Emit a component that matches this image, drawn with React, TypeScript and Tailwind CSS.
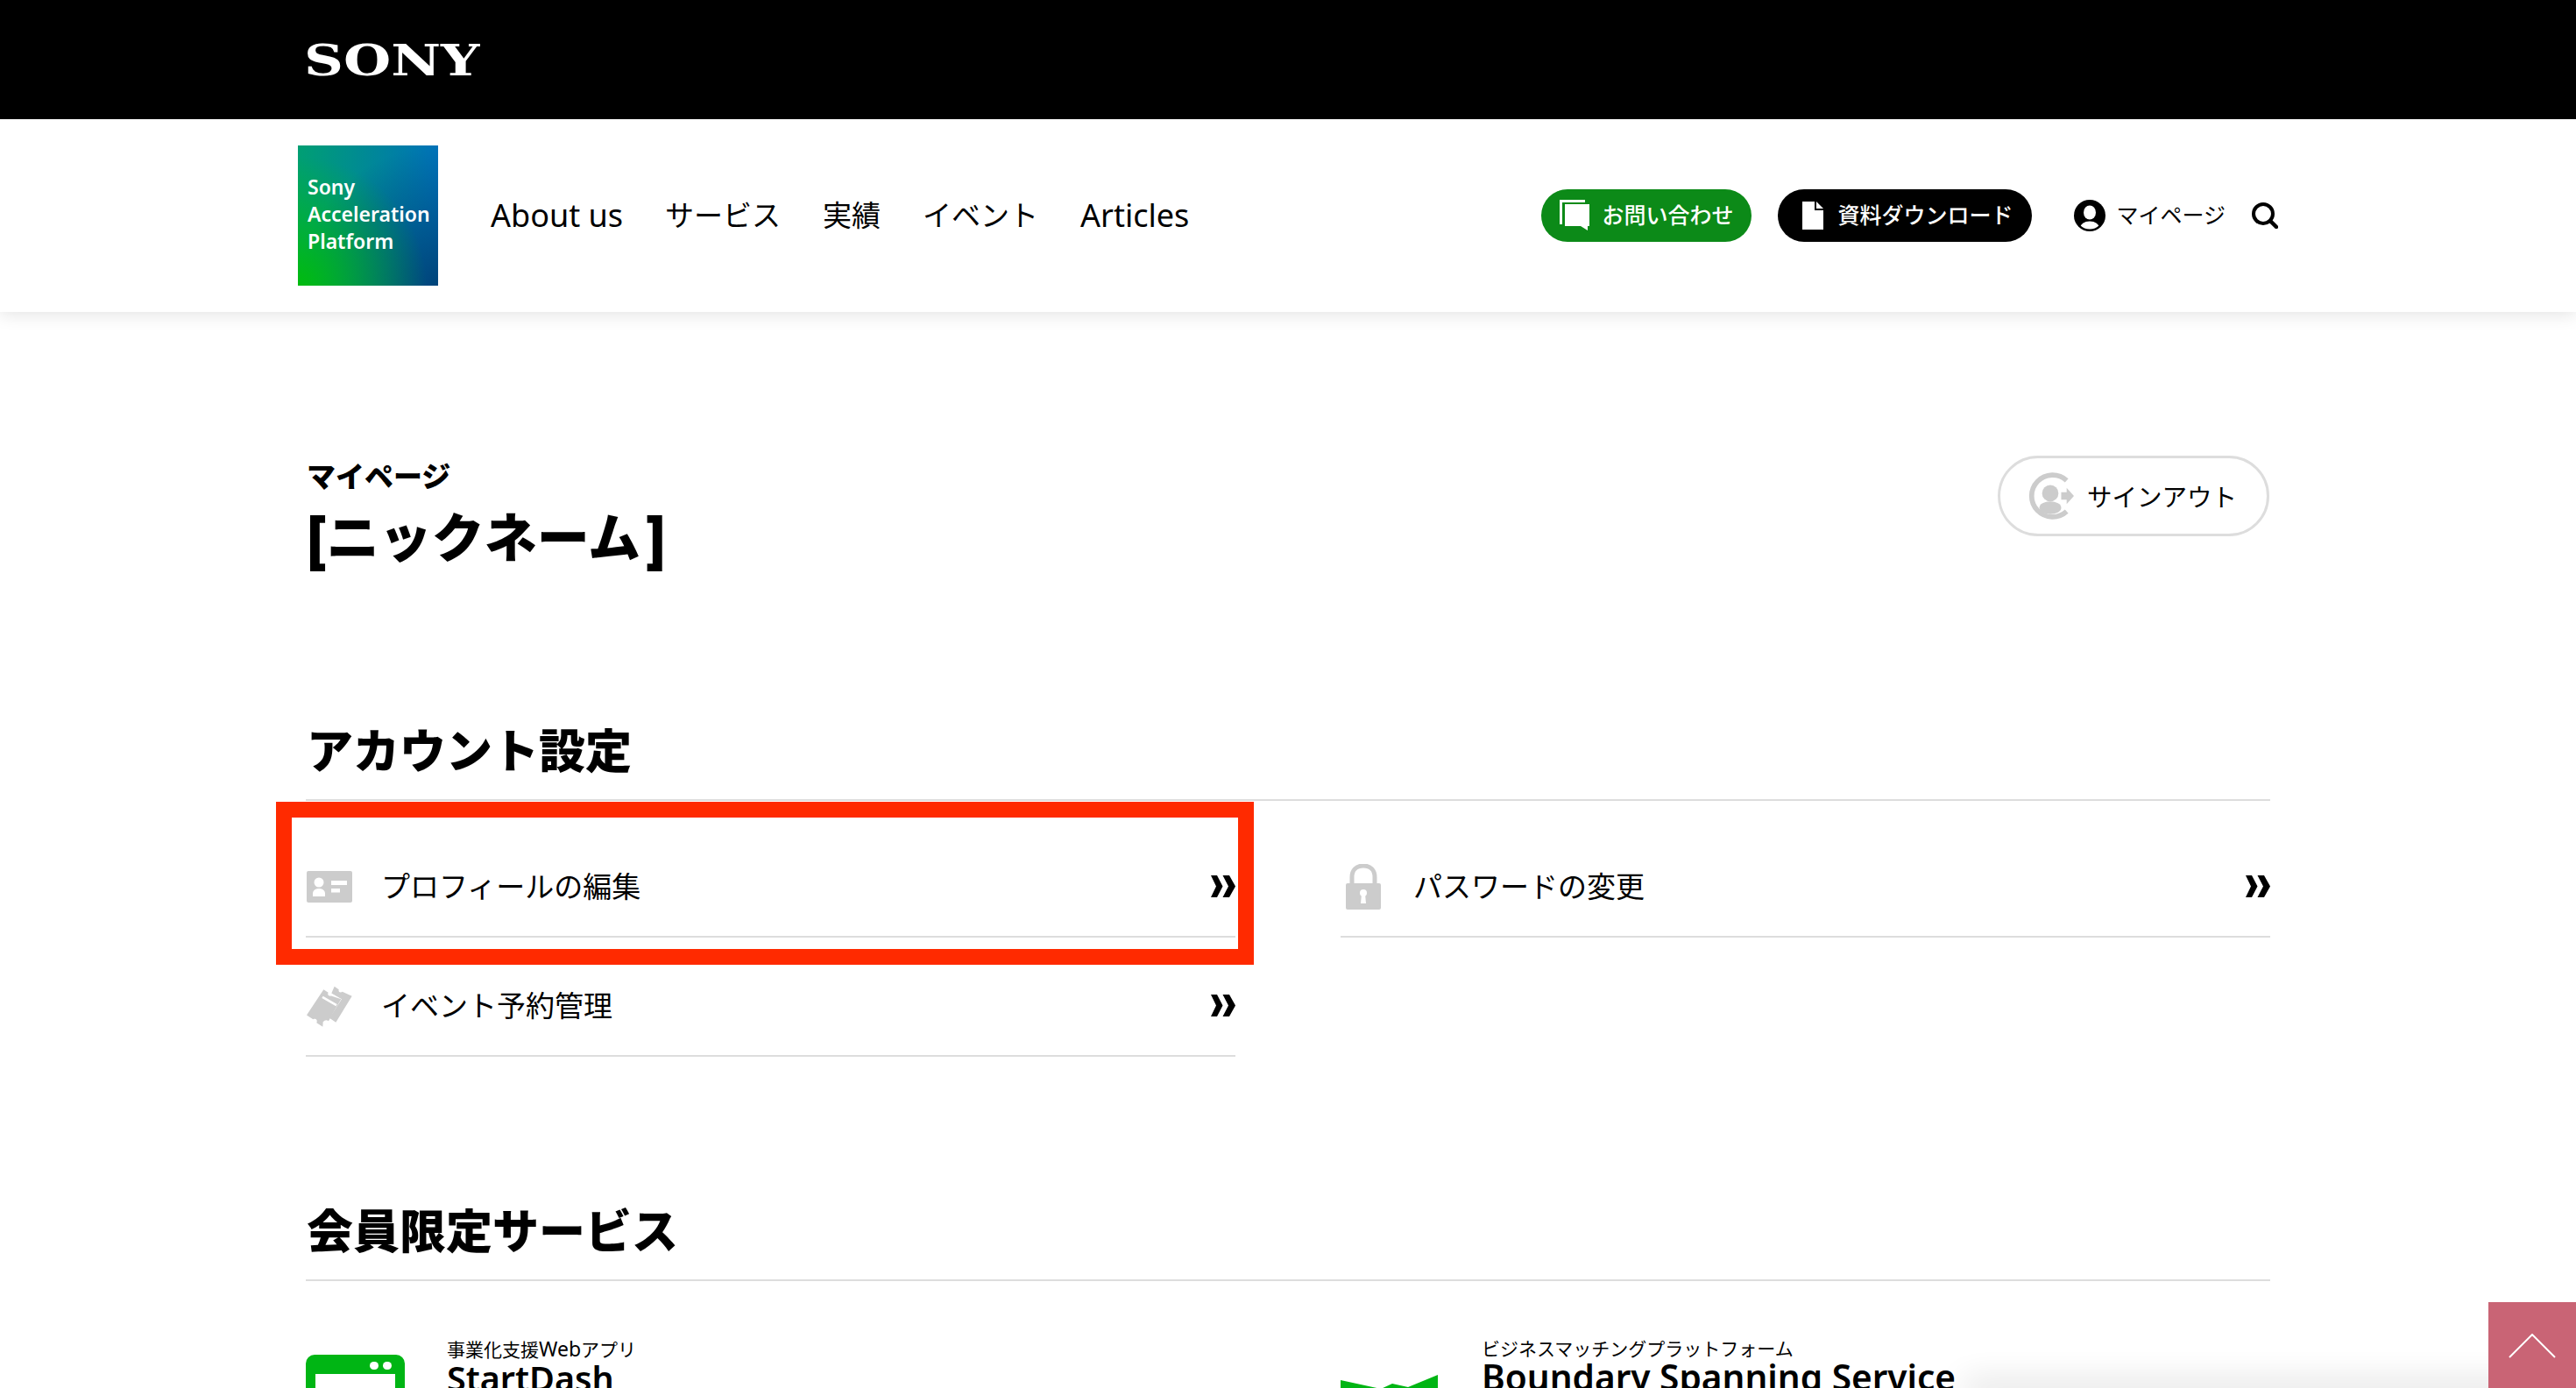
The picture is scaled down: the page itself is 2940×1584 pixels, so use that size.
import React from "react";

const Chevrons = () => (
  <svg width="30" height="25" viewBox="0 0 30 25" className="shrink-0 ml-auto -translate-y-[1px]">
    <path d="M2 0H9L15.5 12.5L9 25H2L8 12.5Z M15.5 0H23L30 12.5L23 25H15.5L22 12.5Z" fill="#000" />
  </svg>
);

const CardIcon = () => (
  <svg width="52" height="36" viewBox="0 0 52 36" className="shrink-0 ml-[1px]">
    <rect width="52" height="36" rx="2" fill="#ccc" />
    <circle cx="14" cy="13" r="5.5" fill="#fff" />
    <path d="M7 29V26C7 22 10 20 14 20S21 22 21 26V29Z" fill="#fff" />
    <rect x="28" y="11" width="18" height="5" fill="#fff" />
    <rect x="28" y="20" width="10" height="4.5" fill="#fff" />
  </svg>
);

const TicketIcon = () => (
  <svg width="52" height="47" viewBox="30 40 156 140" className="shrink-0 ml-[1px]">
    <path d="M88 52L104 63C100 70 106 76 114 74L148 85L130 115L105 160C97 155 92 157 86 163L85 180L64 166C68 158 62 150 52 154L30 140Z" fill="#ccc" />
    <path d="M84 78L132 106" stroke="#fff" strokeWidth="8" fill="none" />
    <path d="M125 42L140 52C137 60 146 65 152 60L185 75L130 165L108 150L150 85L115 65Z" fill="#ccc" />
  </svg>
);

const LockIcon = () => (
  <svg width="40" height="52" viewBox="0 0 40 52" className="shrink-0 ml-[6px]">
    <path d="M7 24V15C7 7 12 2 20 2S33 7 33 15V24" fill="none" stroke="#ccc" strokeWidth="5" />
    <rect y="22" width="40" height="30" rx="2" fill="#ccc" />
    <circle cx="20" cy="33" r="4" fill="#fff" />
    <path d="M18 34H22L23 45H17Z" fill="#fff" />
  </svg>
);

const SignoutIcon = () => (
  <svg width="54" height="54" viewBox="0 0 52 52" className="shrink-0">
    <path d="M44 9A23 23 0 1 0 44 43" fill="none" stroke="#ccc" strokeWidth="5.5" />
    <circle cx="26" cy="23" r="9" fill="#ccc" />
    <ellipse cx="26" cy="39" rx="12" ry="7" fill="#ccc" />
    <path d="M38 22H44V17L52 26L44 35V30H38Z" fill="#ccc" />
  </svg>
);

const Row = ({ icon, label, narrow }: { icon: React.ReactNode; label: string; narrow?: boolean }) => (
  <div className="flex items-center h-[136px] pt-[22px] border-b-2 border-[#ddd]">
    <div className={narrow ? "w-[83px] flex items-center shrink-0" : "w-[86px] flex items-center shrink-0"}>{icon}</div>
    <span className="text-[33px] leading-[44px] text-black">{label}</span>
    <Chevrons />
  </div>
);

const SectionTitle = ({ children }: { children: React.ReactNode }) => (
  <h2 className="h-[87px] pb-[25px] border-b-2 border-[#ddd] text-[53px] leading-[60px] font-black text-black pl-[1px]">
    {children}
  </h2>
);

export default function App() {
  return (
    <div className="relative w-full h-[1584px] overflow-hidden bg-white text-black font-['Noto_Sans','Noto_Sans_CJK_JP',sans-serif]">
      <div className="h-[136px] bg-black flex items-center">
        <div className="w-[2242px] mx-auto">
          <span className="inline-block -ml-[2px] mt-[2px] origin-left scale-x-[1.27] text-[49px] leading-[60px] font-bold text-white font-['DejaVu_Serif',serif]">
            SONY
          </span>
        </div>
      </div>

      <header className="relative h-[220px] bg-white shadow-[0_2px_20px_rgba(0,0,0,0.12)] flex items-center">
        <div className="w-[2260px] mx-auto flex items-center">
          <div className="w-[160px] h-[160px] flex flex-col justify-center pl-[11px] pb-[4px] bg-[radial-gradient(circle_at_0%_100%,#00bb0e_0,transparent_65%),radial-gradient(circle_at_100%_100%,#00447a_0,transparent_70%),linear-gradient(to_right,#009f73,#0072b9)] text-white text-[23px] leading-[31px] font-semibold">
            <span>Sony</span>
            <span>Acceleration</span>
            <span>Platform</span>
          </div>
          <nav className="ml-[60px] flex items-center gap-[48px] text-[33px] leading-[44px] text-black">
            <span className="text-[36px]">About us</span>
            <span>サービス</span>
            <span>実績</span>
            <span>イベント</span>
            <span className="text-[36px]">Articles</span>
          </nav>
          <div className="ml-auto flex items-center">
            <div className="w-[240px] h-[60px] rounded-full bg-[#0c8a18] flex items-center pl-[21px] text-white text-[25px] font-medium">
              <svg width="35" height="36" viewBox="0 0 35 36" className="shrink-0 mr-[13px]">
                <path d="M0 0H29V3H3V28H0Z" fill="#fff" />
                <path d="M6 5H34V30H32V35L24 30H6Z" fill="#fff" />
              </svg>
              お問い合わせ
            </div>
            <div className="ml-[30px] w-[290px] h-[60px] rounded-full bg-black flex items-center pl-[28px] text-white text-[25px] font-medium">
              <svg width="24" height="32" viewBox="0 0 24 32" className="shrink-0 mr-[16px]">
                <path d="M0 0H14V10H24V32H0Z" fill="#fff" />
                <path d="M16 0L24 8H16Z" fill="#fff" />
              </svg>
              資料ダウンロード
            </div>
            <div className="ml-[48px] flex items-center gap-[12px] text-[25px] text-black">
              <svg width="36" height="36" viewBox="0 0 36 36" className="shrink-0">
                <defs>
                  <clipPath id="avatar-clip">
                    <circle cx="18" cy="18" r="15.5" />
                  </clipPath>
                </defs>
                <circle cx="18" cy="18" r="18" fill="#000" />
                <ellipse cx="18" cy="14.5" rx="7" ry="8" fill="#fff" />
                <ellipse cx="18" cy="32" rx="11" ry="7.5" fill="#fff" clipPath="url(#avatar-clip)" />
              </svg>
              マイページ
            </div>
            <svg width="30" height="30" viewBox="0 0 30 30" className="shrink-0 ml-[30px]">
              <circle cx="13" cy="13" r="11" fill="none" stroke="#000" strokeWidth="4" />
              <path d="M21 21L28 28" stroke="#000" strokeWidth="4.5" strokeLinecap="round" />
            </svg>
          </div>
        </div>
      </header>

      <main className="w-[2242px] mx-auto">
        <div className="flex items-start justify-between">
          <div className="pt-[168px] pl-[1px]">
            <div className="text-[33px] leading-[40px] font-black">マイページ</div>
            <div className="mt-[9px] text-[60px] leading-[80px] font-black flex items-center">
              <span className="text-[70px]">[</span>
              <span>ニックネーム</span>
              <span className="text-[70px] ml-[6px]">]</span>
            </div>
          </div>
          <div className="mt-[164px] mr-[1px] w-[310px] h-[92px] rounded-full border-[3px] border-[#ddd] bg-white flex items-center pl-[30px] text-[28.5px] leading-[44px] gap-[15px]">
            <SignoutIcon />
            <span className="mt-[2px]">サインアウト</span>
          </div>
        </div>

        <section className="mt-[174px]">
          <SectionTitle>アカウント設定</SectionTitle>
          <div className="grid grid-cols-2 gap-x-[120px] pt-[20px]">
            <Row icon={<CardIcon />} label="プロフィールの編集" />
            <Row icon={<LockIcon />} label="パスワードの変更" narrow />
            <Row icon={<TicketIcon />} label="イベント予約管理" />
          </div>
        </section>

        <section className="mt-[169px]">
          <SectionTitle>会員限定サービス</SectionTitle>
          <div className="grid grid-cols-2 gap-x-[120px] pt-[63px]">
            <div className="flex items-start">
              <div className="w-[113px] h-[100px] mt-[21px] rounded-t-[10px] bg-[#00b514] shrink-0 relative pt-[22px] px-[11px]">
                <div className="absolute right-[15px] top-[8px] flex gap-[5px]">
                  <span className="w-[10px] h-[9px] rounded-full bg-white" />
                  <span className="w-[10px] h-[9px] rounded-full bg-white" />
                </div>
                <div className="h-full bg-white" />
              </div>
              <div className="ml-[48px]">
                <div className="text-[21px] leading-[28px]">
                  事業化支援<span className="text-[23px]">Web</span>アプリ
                </div>
                <div className="text-[39.5px] leading-[36px] mt-[1px] font-semibold">StartDash</div>
              </div>
            </div>
            <div className="flex items-start">
              <svg width="112" height="40" viewBox="0 0 112 40" className="shrink-0 mt-[44px]">
                <path d="M0 6L46 16L59 10L77 14L111 0V40H0Z" fill="#00b514" />
              </svg>
              <div className="ml-[49px]">
                <div className="text-[21px] leading-[28px]">ビジネスマッチングプラットフォーム</div>
                <div className="text-[40.6px] leading-[36px] mt-[1px] font-semibold">Boundary Spanning Service</div>
              </div>
            </div>
          </div>
        </section>
      </main>

      <div className="absolute left-[315px] top-[915px] w-[1116px] h-[186px] border-[18px] border-[#ff2a00]" />

      <div className="absolute left-[2250px] top-[1584px] w-[700px] h-[4px] shadow-[0_0_36px_8px_rgba(0,0,0,0.14)]" />

      <div className="absolute right-0 bottom-0 w-[100px] h-[98px] bg-[#c96475] flex items-start justify-center pt-[36px]">
        <svg width="54" height="28" viewBox="0 0 54 28">
          <path d="M1 27L27 1L53 27" fill="none" stroke="#fff" strokeWidth="2" />
        </svg>
      </div>
    </div>
  );
}
